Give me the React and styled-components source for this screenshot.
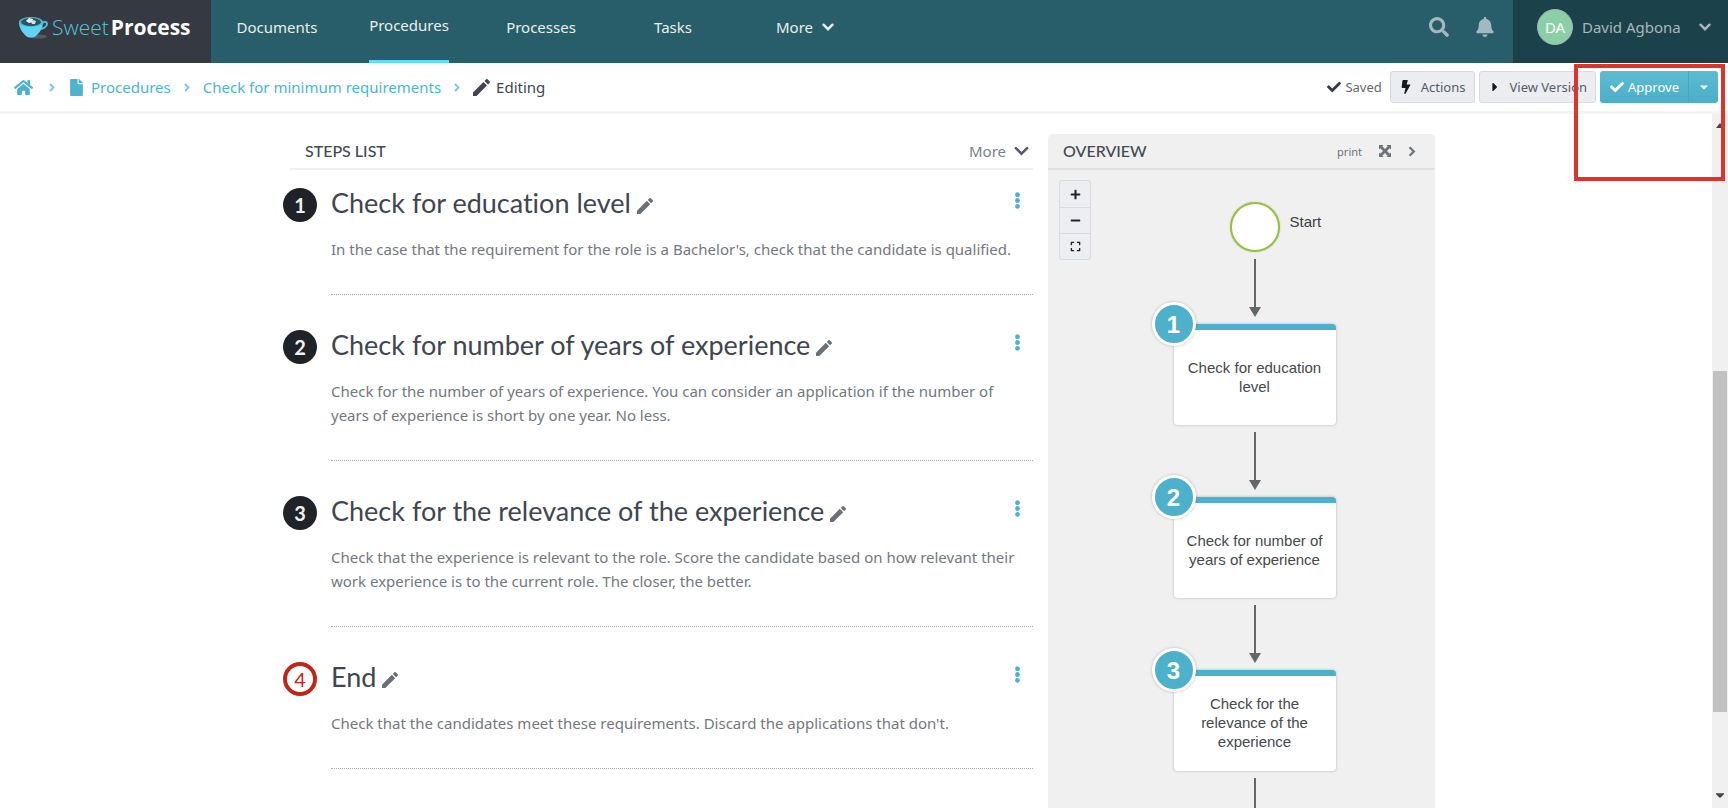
import React from "react";
import styled, { createGlobalStyle, css } from "styled-components";
import {
  FaBell,
  FaBolt,
  FaCaretDown,
  FaCaretRight,
  FaCheck,
  FaEllipsisV,
  FaExpand,
  FaFile,
  FaHome,
  FaMinus,
  FaPlus,
  FaSearch,
} from "react-icons/fa";

const navItems = [
  { label: "Documents" },
  { label: "Procedures", active: true },
  { label: "Processes" },
  { label: "Tasks" },
  { label: "More", menu: true },
];

const steps = [
  {
    title: "Check for education level",
    text: "In the case that the requirement for the role is a Bachelor's, check that the candidate is qualified.",
  },
  {
    title: "Check for number of years of experience",
    text: "Check for the number of years of experience. You can consider an application if the number of years of experience is short by one year. No less.",
  },
  {
    title: "Check for the relevance of the experience",
    text: "Check that the experience is relevant to the role. Score the candidate based on how relevant their work experience is to the current role. The closer, the better.",
  },
  {
    title: "End",
    text: "Check that the candidates meet these requirements. Discard the applications that don't.",
    last: true,
  },
];

const ChevronRight = ({ size = 6 }) => (
  <svg width={size} height={size + 3} viewBox="0 0 6 9" fill="none" aria-hidden="true">
    <path d="M1 1l3.500 3.500L1 8" stroke="currentColor" strokeWidth="1.800" />
  </svg>
);

const ChevronDown = ({ size = 12, thick = 2.4 }) => (
  <svg width={size} height={(size * 2) / 3} viewBox="0 0 12 8" fill="none" aria-hidden="true">
    <path d="M1.500 1.700L6 6.200l4.500-4.500" stroke="currentColor" strokeWidth={thick} strokeLinecap="round" />
  </svg>
);

const Pencil = ({ size = 16 }) => (
  <svg width={size} height={size} viewBox="3 3 18 18" aria-hidden="true">
    <path
      d="M3 17.250V21h3.750L17.810 9.940l-3.750-3.750L3 17.250zM20.710 7.040a1 1 0 0 0 0-1.410l-2.340-2.340a1 1 0 0 0-1.410 0l-1.830 1.830 3.750 3.750 1.830-1.830z"
      fill="currentColor"
    />
  </svg>
);

const Cup = () => (
  <svg width="31" height="25" viewBox="0 0 31 25" aria-hidden="true">
    <ellipse cx="20" cy="21.500" rx="9" ry="2" fill="#575a5f" />
    <path d="M24 8c3-2 5-1 5 1 0 3-4 5-8 5" fill="none" stroke="#4fb9d3" strokeWidth="2" />
    <path d="M1 7c0 6 3 10 7 14 2 2 8 2 10 0 4-4 7-8 7-14z" fill="#5fd5f0" />
    <ellipse cx="13" cy="7" rx="12" ry="5" fill="#56b5c9" />
    <ellipse cx="13" cy="7" rx="10" ry="4" fill="#225864" />
    <path d="M8 6l3-3 4 1-1 3-3 1z" fill="#f2f2f2" />
    <path d="M13 7l2-2 3 1-1 3-3 0z" fill="#dcdcdc" />
  </svg>
);

const ExpandArrows = () => (
  <svg width="12" height="12" viewBox="0 0 12 12" aria-hidden="true">
    <path
      d="M0 0h4.500L3.300 1.300 6 4l2.700-2.700L7.500 0H12v4.500L10.700 3.300 8 6l2.700 2.700L12 7.500V12H7.500l1.200-1.300L6 8l-2.700 2.700L4.500 12H0V7.500l1.300 1.200L4 6 1.300 3.300 0 4.500z"
      fill="currentColor"
    />
  </svg>
);

const CaretUp = () => (
  <svg width="8" height="5" viewBox="0 0 8 5" aria-hidden="true">
    <path d="M0 5l4-5 4 5z" fill="currentColor" />
  </svg>
);

const Arrow = () => (
  <ArrowSvg width="12" height="58" viewBox="0 0 12 58" aria-hidden="true">
    <path d="M6 0v50" stroke="#616867" strokeWidth="2" />
    <path d="M0 48h12L6 58z" fill="#616867" />
  </ArrowSvg>
);

const App = () => {
  return (
    <Page>
      <GlobalStyle />
      <TopBar>
        <Brand href="#">
          <Cup />
          <BrandName>
            Sweet<b>Process</b>
          </BrandName>
        </Brand>
        <Nav>
          {navItems.map((item) => (
            <NavCell key={item.label}>
              <NavLink href="#" $active={item.active}>
                {item.label}
                {item.menu && <ChevronDown />}
              </NavLink>
            </NavCell>
          ))}
        </Nav>
        <TopTools>
          <ToolButton aria-label="Search">
            <FaSearch size={20} />
          </ToolButton>
          <ToolButton aria-label="Notifications">
            <FaBell size={20} />
          </ToolButton>
        </TopTools>
        <Profile>
          <Avatar>DA</Avatar>
          <span>David Agbona</span>
          <ChevronDown />
        </Profile>
      </TopBar>

      <SubBar>
        <Crumbs aria-label="Breadcrumb">
          <HomeLink href="#" aria-label="Home">
            <FaHome size={19} />
          </HomeLink>
          <ChevronRight />
          <CrumbLink href="#">
            <FaFile size={17} />
            Procedures
          </CrumbLink>
          <ChevronRight />
          <CrumbLink href="#">Check for minimum requirements</CrumbLink>
          <ChevronRight />
          <CrumbCurrent>
            <Pencil size={17} />
            Editing
          </CrumbCurrent>
        </Crumbs>
        <Actions>
          <Saved>
            <FaCheck size={14} />
            Saved
          </Saved>
          <GreyButton>
            <FaBolt size={14} />
            Actions
          </GreyButton>
          <GreyButton>
            <FaCaretRight size={14} />
            View Version
          </GreyButton>
          <ApproveGroup>
            <ApproveButton>
              <FaCheck size={14} />
              Approve
            </ApproveButton>
            <ApproveMenu aria-label="More approval options">
              <FaCaretDown size={12} />
            </ApproveMenu>
          </ApproveGroup>
        </Actions>
      </SubBar>

      <Body>
        <Content>
          <StepsColumn>
            <StepsHeader>
              <PanelTitle>STEPS LIST</PanelTitle>
              <MoreButton>
                More
                <ChevronDown size={15} thick={2} />
              </MoreButton>
            </StepsHeader>
            {steps.map((step, i) => (
              <Step key={step.title}>
                <StepNumber $last={step.last}>{i + 1}</StepNumber>
                <StepMain>
                  <StepHead>
                    <StepTitle>{step.title}</StepTitle>
                    <EditButton aria-label={"Edit " + step.title}>
                      <Pencil />
                    </EditButton>
                    <StepMenu aria-label={"Options for " + step.title}>
                      <FaEllipsisV size={17} />
                    </StepMenu>
                  </StepHead>
                  <StepText>{step.text}</StepText>
                </StepMain>
              </Step>
            ))}
          </StepsColumn>

          <Overview>
            <OverviewHeader>
              <PanelTitle>OVERVIEW</PanelTitle>
              <OverviewTools>
                <PlainButton>print</PlainButton>
                <PlainButton aria-label="Full screen">
                  <ExpandArrows />
                </PlainButton>
                <PlainButton aria-label="Collapse overview">
                  <ChevronRight size={8} />
                </PlainButton>
              </OverviewTools>
            </OverviewHeader>
            <Diagram>
              <ZoomControls>
                <ZoomButton aria-label="Zoom in">
                  <FaPlus size={11} />
                </ZoomButton>
                <ZoomButton aria-label="Zoom out">
                  <FaMinus size={11} />
                </ZoomButton>
                <ZoomButton aria-label="Fit to view">
                  <FaExpand size={11} />
                </ZoomButton>
              </ZoomControls>
              <Flow>
                <StartNode>
                  <StartLabel>Start</StartLabel>
                </StartNode>
                {steps.slice(0, 3).map((step, i) => (
                  <React.Fragment key={step.title}>
                    <Arrow />
                    <Node>
                      <NodeNumber>{i + 1}</NodeNumber>
                      {step.title}
                    </Node>
                  </React.Fragment>
                ))}
                <Arrow />
              </Flow>
            </Diagram>
          </Overview>
        </Content>
        <ScrollTrack>
          <CaretUp />
          <ScrollThumb />
          <FaCaretDown size={14} />
        </ScrollTrack>
      </Body>
      <Highlight />
    </Page>
  );
};

const GlobalStyle = createGlobalStyle`
  * {
    box-sizing: border-box;
  }

  body {
    margin: 0;
    background: #fff;
    color: #4a4f57;
    font-family: "Noto Sans", "Open Sans", sans-serif;
    font-size: 15px;
  }

  a {
    color: inherit;
    text-decoration: none;
  }

  button {
    display: flex;
    align-items: center;
    justify-content: center;
    padding: 0;
    border: 0;
    background: none;
    color: inherit;
    font: inherit;
    cursor: pointer;
  }

  svg {
    flex-shrink: 0;
  }
`;

const Page = styled.div`
  position: relative;
  display: flex;
  flex-direction: column;
  height: 100vh;
  overflow: hidden;
`;

const TopBar = styled.header`
  display: flex;
  flex-shrink: 0;
  height: 63px;
  background: #285e69;
  color: #e9efef;
`;

const Brand = styled.a`
  display: flex;
  gap: 3px;
  width: 211px;
  padding: 15px 0 0 18px;
  background: #353941;
`;

const BrandName = styled.span`
  color: #57c4dd;
  font-family: "Open Sans", sans-serif;
  font-size: 21px;
  font-weight: 300;
  line-height: 24px;

  b {
    margin-left: 2px;
    color: #fff;
    font-weight: 700;
  }
`;

const Nav = styled.nav`
  display: flex;
  flex: 1;
`;

const NavCell = styled.div`
  display: flex;
  justify-content: center;
  width: 132px;
`;

const NavLink = styled.a`
  display: flex;
  gap: 9px;
  height: 63px;
  padding-top: 17px;
  line-height: 20px;

  svg {
    margin-top: 6px;
  }

  ${(props) =>
    props.$active &&
    css`
      padding-top: 15px;
      border-bottom: 3px solid #5fdcf8;
    `}
`;

const TopTools = styled.div`
  display: flex;
  align-items: flex-start;
  gap: 26px;
  padding: 17px 18px 0 0;
`;

const ToolButton = styled.button`
  color: #a3b9be;
`;

const Profile = styled.button`
  justify-content: flex-start;
  gap: 9px;
  width: 215px;
  padding: 0 0 9px 24px;
  background: #1b424b;
  color: #a9b7ba;

  span + svg {
    margin-left: 9px;
  }
`;

const Avatar = styled.div`
  display: flex;
  align-items: center;
  justify-content: center;
  width: 36px;
  height: 36px;
  border: 1px solid #a5b3b3;
  border-radius: 50%;
  background: #8acfa6;
  color: #fff;
  font-size: 15px;
`;

const SubBar = styled.div`
  display: flex;
  align-items: center;
  justify-content: space-between;
  flex-shrink: 0;
  height: 51px;
  padding: 0 10px 0 14px;
  border-bottom: 3px solid #f4f4f4;
`;

const Crumbs = styled.nav`
  display: flex;
  align-items: center;
  gap: 13px;
  color: #7cc6d8;
`;

const HomeLink = styled.a`
  display: flex;
  margin-right: 3px;
  color: #4eb1cb;
`;

const CrumbLink = styled.a`
  display: flex;
  align-items: center;
  gap: 6px;
  color: #4eb4ce;
`;

const CrumbCurrent = styled.span`
  display: flex;
  align-items: center;
  gap: 6px;
  color: #40464f;
`;

const Actions = styled.div`
  display: flex;
  align-items: center;
  gap: 4px;
  font-size: 13px;
`;

const Saved = styled.span`
  display: flex;
  align-items: center;
  gap: 4px;
  margin-right: 4px;
  color: #62686f;

  svg {
    color: #343a40;
  }
`;

const GreyButton = styled.button`
  gap: 8px;
  height: 32px;
  padding: 0 8px;
  border: 1px solid #d6dbe2;
  border-radius: 3px;
  background: #ebedf1;
  color: #565c66;

  svg {
    color: #15181c;
  }
`;

const ApproveGroup = styled.div`
  display: flex;
  height: 32px;
  border-radius: 3px;
  background: linear-gradient(#5cbbd1, #4bafc8);
  color: #fff;
`;

const ApproveButton = styled.button`
  gap: 4px;
  padding: 0 9px 0 10px;
`;

const ApproveMenu = styled.button`
  width: 30px;
  border-left: 1px solid #4aa6bf;
`;

const Body = styled.main`
  display: flex;
  flex: 1;
  min-height: 0;
`;

const Content = styled.div`
  display: flex;
  flex: 1;
  gap: 15px;
  max-width: 1158px;
  margin: 0 auto;
  padding-top: 20px;
`;

const StepsColumn = styled.section`
  flex: 1;
  min-width: 0;
`;

const StepsHeader = styled.div`
  display: flex;
  align-items: center;
  justify-content: space-between;
  height: 36px;
  margin-left: 13px;
  padding: 0 4px 0 15px;
  border-bottom: 2px solid #efefef;
`;

const PanelTitle = styled.h2`
  margin: 0;
  color: #434951;
  font-family: Lato, sans-serif;
  font-size: 16px;
  font-weight: 500;
  line-height: 20px;
`;

const MoreButton = styled.button`
  gap: 8px;
  color: #7b8088;

  svg {
    color: #545b64;
  }
`;

const Step = styled.article`
  display: flex;
  gap: 14px;
  padding: 30px 0 0 6px;

  ${StepsHeader} + & {
    padding-top: 13px;
  }
`;

const StepNumber = styled.div`
  display: flex;
  align-items: center;
  justify-content: center;
  flex-shrink: 0;
  width: 34px;
  height: 34px;
  margin-top: 5px;
  border-radius: 50%;
  background: #1f2328;
  color: #f1f1f1;
  font-family: Lato, sans-serif;
  font-size: 20px;
  font-weight: 700;

  ${(props) =>
    props.$last &&
    css`
      border: 4px solid #bf2519;
      background: #fff;
      color: #bf2519;
      font-weight: 400;
    `}
`;

const StepMain = styled.div`
  flex: 1;
  min-width: 0;
  padding-bottom: 33px;
  border-bottom: 1px dotted #a9a9a9;
`;

const StepHead = styled.div`
  display: flex;
  align-items: center;
  height: 40px;
`;

const StepTitle = styled.h3`
  margin: 0;
  color: #3f4650;
  font-family: Lato, sans-serif;
  font-size: 27px;
  font-weight: 400;
  font-variant-ligatures: none;
  line-height: 40px;
`;

const EditButton = styled.button`
  margin: 6px 0 0 6px;
  color: #69707a;
`;

const StepMenu = styled.button`
  margin: 0 7px 6px auto;
  color: #4eb1cb;
`;

const StepText = styled.p`
  margin: 14px 0 0;
  color: #73787e;
  line-height: 24px;
`;

const Overview = styled.aside`
  display: flex;
  flex-direction: column;
  width: 387px;
  border-radius: 5px 5px 0 0;
  background: #f0f0f0;
`;

const OverviewHeader = styled.div`
  display: flex;
  align-items: center;
  justify-content: space-between;
  flex-shrink: 0;
  height: 36px;
  padding: 0 19px 0 15px;
  border-bottom: 2px solid #e3e3e3;
`;

const OverviewTools = styled.div`
  display: flex;
  align-items: center;
  gap: 17px;
  font-size: 11px;
`;

const PlainButton = styled.button`
  color: #6c737b;
`;

const Diagram = styled.div`
  position: relative;
  flex: 1;
  min-height: 0;
  overflow: hidden;
`;

const ZoomControls = styled.div`
  position: absolute;
  top: 10px;
  left: 11px;
  width: 32px;
  border: 1px solid #d5dae3;
  border-radius: 3px;
  background: #eceef2;
`;

const ZoomButton = styled.button`
  width: 30px;
  height: 26px;
  color: #202428;

  & + & {
    border-top: 1px solid #d5dae3;
  }
`;

const Flow = styled.div`
  display: flex;
  flex-direction: column;
  align-items: center;
  padding: 32px 0 0 26px;
  font-family: "Liberation Sans", Arial, sans-serif;
`;

const StartNode = styled.div`
  position: relative;
  flex-shrink: 0;
  width: 50px;
  height: 50px;
  border: 2px solid #97c13c;
  border-radius: 50%;
  background: #fff;
  box-shadow: 0 0 2px rgba(0, 0, 0, 0.2);
`;

const StartLabel = styled.span`
  position: absolute;
  top: 8px;
  left: 58px;
  color: #3a3d3f;
  line-height: 20px;
`;

const ArrowSvg = styled.svg`
  margin: 7px 0;
`;

const Node = styled.div`
  position: relative;
  display: flex;
  align-items: center;
  justify-content: center;
  flex-shrink: 0;
  width: 162px;
  height: 101px;
  padding: 0 8px 2px;
  border-top: 6px solid #4eb1cb;
  border-radius: 4px;
  background: #fff;
  box-shadow: 0 0 3px rgba(0, 0, 0, 0.25);
  color: #45494c;
  line-height: 19px;
  text-align: center;
`;

const NodeNumber = styled.div`
  position: absolute;
  top: -28px;
  left: -22px;
  display: flex;
  align-items: center;
  justify-content: center;
  width: 44px;
  height: 44px;
  border: 3px solid #fff;
  border-radius: 50%;
  background: #4eb1cb;
  box-shadow: 0 0 3px rgba(0, 0, 0, 0.25);
  color: #fff;
  font-size: 24px;
  font-weight: 700;
`;

const ScrollTrack = styled.div`
  display: flex;
  flex-direction: column;
  align-items: center;
  width: 16px;
  padding: 9px 0 6px;
  background: #f0f0f0;
  color: #444;
`;

const ScrollThumb = styled.div`
  flex: 1;
  width: 14px;
  margin: 243px 0 76px;
  background: #c1c1c1;
`;

const Highlight = styled.div`
  position: absolute;
  top: 64px;
  right: 3px;
  width: 151px;
  height: 117px;
  border: 4px solid #dc342b;
  pointer-events: none;
`;

export default App;
